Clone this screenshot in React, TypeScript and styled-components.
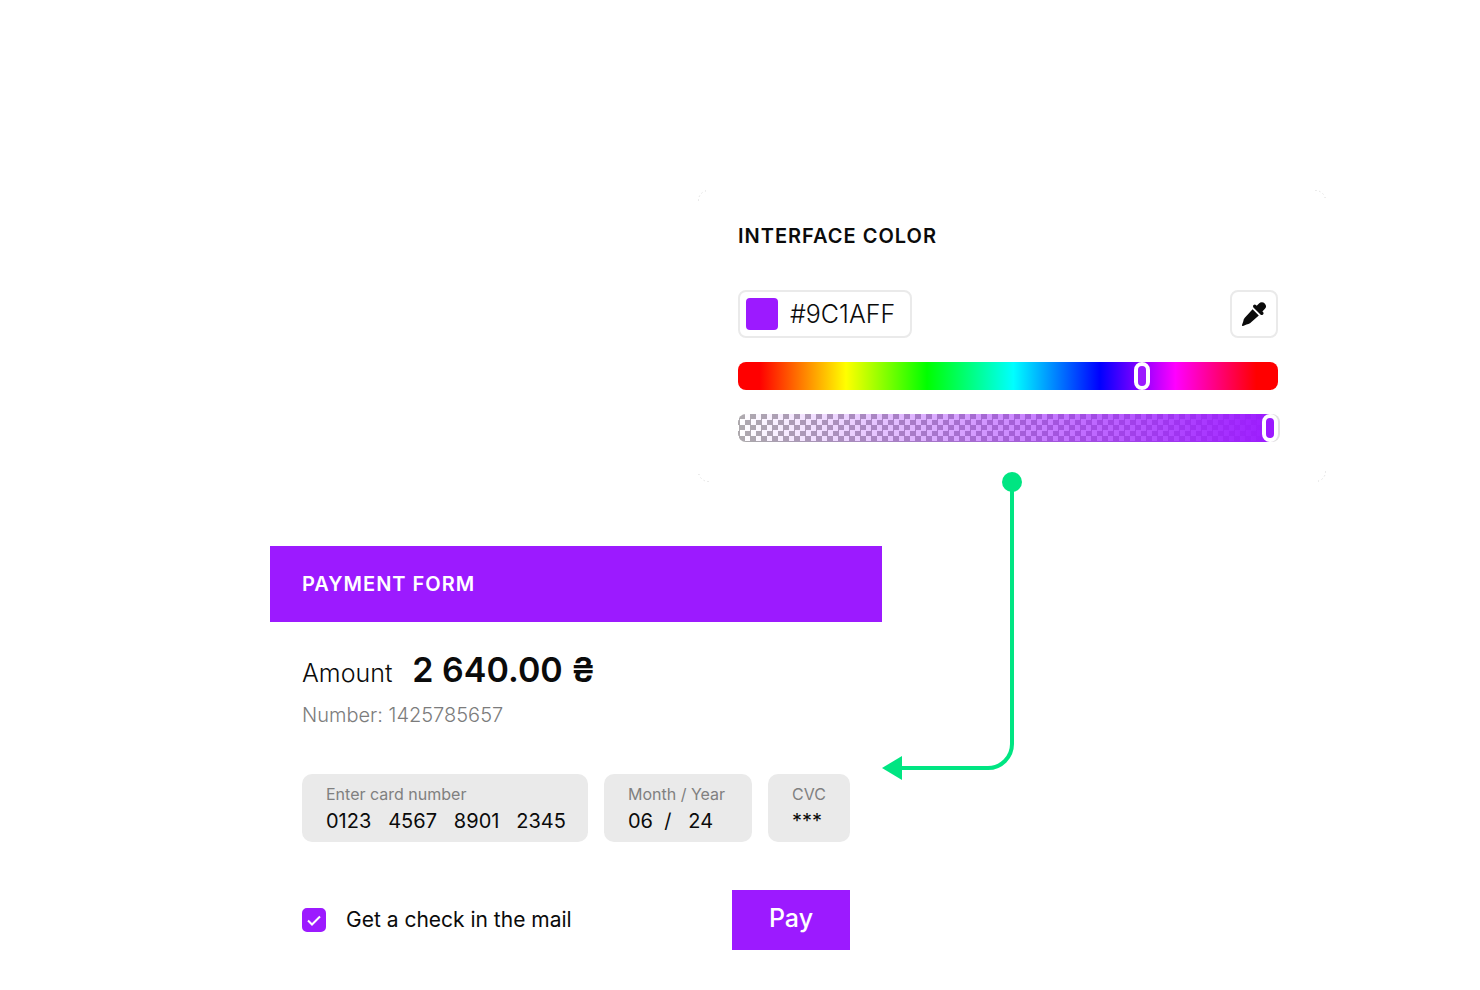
import React, { useState } from "react";
import styled, { createGlobalStyle } from "styled-components";

const purple = "#9c1aff";
const green = "#00e582";
const ink = "#0b0b0b";

const GlobalStyle = createGlobalStyle`
  *, *::before, *::after { box-sizing: border-box; }
  body {
    margin: 0;
    background: #fff;
    color: ${ink};
    font-family: Inter, "Liberation Sans", sans-serif;
  }
  input, button { font-family: inherit; }
`;

const Scene = styled.main`
  display: grid;
  grid-template-columns: 428fr 184fr 444fr;
  row-gap: 64px;
  align-items: start;
  padding: 190px 154px 40px 270px;
`;

const ColorPanel = styled.section`
  position: relative;
  grid-column: 2 / 4;
  grid-row: 1;
  min-height: 292px;
  padding: 32px 48px 40px 40px;
`;

const Corner = styled.svg<{ $turn: number; $side: string }>`
  position: absolute;
  ${(p) => p.$side}
  transform: rotate(${(p) => p.$turn}deg);
`;

const Title = styled.h2`
  margin: 0;
  font-size: 20px;
  line-height: 28px;
  font-weight: 600;
  letter-spacing: 1px;
  text-transform: uppercase;
`;

const PickerRow = styled.div`
  display: flex;
  justify-content: space-between;
  margin: 40px 0 24px;
`;

const HexField = styled.label`
  display: flex;
  align-items: center;
  gap: 12px;
  width: 174px;
  height: 48px;
  padding: 0 6px;
  border: 2px solid #eaeaea;
  border-radius: 8px;
`;

const Swatch = styled.span`
  flex: none;
  width: 32px;
  height: 32px;
  border-radius: 4px;
  background: ${purple};
`;

const HexInput = styled.input`
  flex: 1;
  min-width: 0;
  padding: 0;
  border: 0;
  outline: 0;
  background: none;
  color: ${ink};
  font-size: 25px;
  line-height: 32px;
  font-weight: 300;
`;

const DropperButton = styled.button`
  display: grid;
  place-items: center;
  width: 48px;
  height: 48px;
  padding: 0;
  border: 2px solid #eaeaea;
  border-radius: 8px;
  background: none;
  color: ${ink};
`;

const Slider = styled.input`
  appearance: none;
  display: block;
  width: 100%;
  height: 28px;
  margin: 0 0 24px;
  border-radius: 8px;
  outline: 0;

  &::-webkit-slider-runnable-track { height: 28px; }
  &::-webkit-slider-thumb {
    appearance: none;
    width: 16px;
    height: 28px;
    border: 4px solid #fff;
    border-radius: 8px;
    background: ${purple} padding-box;
  }
`;

const HueSlider = styled(Slider)`
  background: linear-gradient(
    90deg,
    #f00 4%, #ff0 20%, #0f0 35%, #0ff 51%, #00f 67%, #f0f 81%, #f00 96%
  );
`;

const AlphaSlider = styled(Slider)`
  margin: 0;
  background:
    linear-gradient(90deg, rgba(156, 26, 255, 0), ${purple}),
    linear-gradient(#aaa, #aaa) bottom / 100% 1px no-repeat,
    repeating-conic-gradient(#aeaaae 0 25%, #fff 0 50%) -4px 0 / 11px 11px;

  &::-webkit-slider-thumb { box-shadow: 2px 0 0 #e2e2e2; }
`;

const Connector = styled.svg`
  grid-column: 3;
  grid-row: 2;
  margin-top: -74px;
`;

const PaymentForm = styled.form`
  grid-column: 1 / 3;
  grid-row: 2;
`;

const FormHeader = styled.header`
  padding: 24px 32px;
  background: ${purple};
  color: #fff;
`;

const FormBody = styled.div`
  padding: 28px 32px 0;
`;

const AmountLine = styled.p`
  display: flex;
  align-items: baseline;
  gap: 20px;
  height: 43px;
  margin: 0;
  font-size: 25px;
  line-height: 40px;
  font-weight: 300;
`;

const AmountValue = styled.strong`
  font-size: 34px;
  font-weight: 600;
`;

const OrderNumber = styled.p`
  margin: 8px 0 45px;
  color: #7c7c7c;
  font-size: 20px;
  line-height: 28px;
  font-weight: 300;
`;

const Fields = styled.div`
  display: grid;
  grid-template-columns: 286fr 148fr 82fr;
  gap: 16px;
`;

const Field = styled.label`
  display: block;
  min-width: 0;
  height: 68px;
  padding: 8px 0 0 24px;
  border-radius: 10px;
  background: #eaeaea;
`;

const FieldLabel = styled.span`
  display: block;
  color: #808080;
  font-size: 16px;
  line-height: 24px;
`;

const FieldInput = styled.input`
  display: block;
  width: 100%;
  height: 30px;
  padding: 0;
  border: 0;
  outline: 0;
  background: none;
  color: ${ink};
  font-size: 20px;
  line-height: 28px;
`;

const FormFooter = styled.footer`
  display: flex;
  align-items: center;
  justify-content: space-between;
  margin-top: 48px;
`;

const CheckLabel = styled.label`
  display: flex;
  align-items: center;
  gap: 20px;
  font-size: 21px;
  line-height: 28px;
`;

const CheckBox = styled.span`
  display: grid;
  width: 24px;
  height: 24px;

  > * { grid-area: 1 / 1; }
  > svg { pointer-events: none; }
`;

const CheckInput = styled.input`
  appearance: none;
  width: 24px;
  height: 24px;
  margin: 0;
  border: 2px solid ${purple};
  border-radius: 5px;

  &:checked { background: ${purple}; }
`;

const PayButton = styled.button`
  width: 118px;
  height: 60px;
  padding: 0 0 4px;
  border: 0;
  background: ${purple};
  color: #fff;
  font-size: 25px;
  line-height: 32px;
  font-weight: 500;
`;

const corners = [
  { turn: 0, side: "top: 0; left: 0;" },
  { turn: 90, side: "top: 0; right: 0;" },
  { turn: 180, side: "bottom: 0; right: 0;" },
  { turn: 270, side: "bottom: 0; left: 0;" },
];

const fields = [
  { label: "Enter card number", value: "0123   4567   8901   2345" },
  { label: "Month / Year", value: "06  /   24" },
  { label: "CVC", value: "***" },
];

export default function App() {
  const [hue, setHue] = useState(272);
  const [alpha, setAlpha] = useState(100);

  return (
    <>
      <GlobalStyle />
      <Scene>
        <ColorPanel>
          {corners.map((c) => (
            <Corner key={c.turn} $turn={c.turn} $side={c.side} width="12" height="12" aria-hidden="true">
              <path d="M.5 10.500A10 10 0 0 1 10.500 .5" fill="none" stroke="#d4d4d4" strokeDasharray="1 3" />
            </Corner>
          ))}
          <Title>Interface color</Title>
          <PickerRow>
            <HexField>
              <Swatch />
              <HexInput aria-label="Hex color" defaultValue="#9C1AFF" />
            </HexField>
            <DropperButton type="button" aria-label="Pick a color">
              <svg width="26" height="26" viewBox="0 0 26 26" fill="currentColor">
                <path d="M18 2.500a4 4 0 0 1 5.700 0 4 4 0 0 1 0 5.600l-2.300 2.300.8.800a1.800 1.800 0 0 1-2.500 2.500L12.400 6.400a1.800 1.800 0 0 1 2.500-2.500l.8.800z" />
                <path d="M11.600 8.200 17.800 14.400 9 22.200Q7.500 23.300 5.500 23.500L2 25a.8.800 0 0 1-1-1L2.300 20.300Q2.500 18 3.800 16.700Z" />
              </svg>
            </DropperButton>
          </PickerRow>
          <HueSlider
            type="range" min={0} max={360} value={hue} aria-label="Hue"
            onChange={(e) => setHue(Number(e.target.value))}
          />
          <AlphaSlider
            type="range" min={0} max={100} value={alpha} aria-label="Opacity"
            onChange={(e) => setAlpha(Number(e.target.value))}
          />
        </ColorPanel>

        <PaymentForm onSubmit={(e) => e.preventDefault()}>
          <FormHeader>
            <Title>Payment form</Title>
          </FormHeader>
          <FormBody>
            <AmountLine>
              Amount <AmountValue>2 640.00 ₴</AmountValue>
            </AmountLine>
            <OrderNumber>Number: 1425785657</OrderNumber>
            <Fields>
              {fields.map((f) => (
                <Field key={f.label}>
                  <FieldLabel>{f.label}</FieldLabel>
                  <FieldInput defaultValue={f.value} />
                </Field>
              ))}
            </Fields>
            <FormFooter>
              <CheckLabel>
                <CheckBox>
                  <CheckInput type="checkbox" defaultChecked />
                  <svg width="24" height="24" viewBox="0 0 24 24" fill="none" aria-hidden="true">
                    <path d="M6 12.500 10 16.500 18 8.500" stroke="#fff" strokeWidth="2" />
                  </svg>
                </CheckBox>
                Get a check in the mail
              </CheckLabel>
              <PayButton type="submit">Pay</PayButton>
            </FormFooter>
          </FormBody>
        </PaymentForm>

        <Connector width="140" height="310" viewBox="0 0 140 310" aria-hidden="true">
          <circle cx="130" cy="10" r="10" fill={green} />
          <path d="M130 10V272A24 24 0 0 1 106 296H18" fill="none" stroke={green} strokeWidth="4" />
          <path d="M0 296 20 284V308Z" fill={green} />
        </Connector>
      </Scene>
    </>
  );
}
